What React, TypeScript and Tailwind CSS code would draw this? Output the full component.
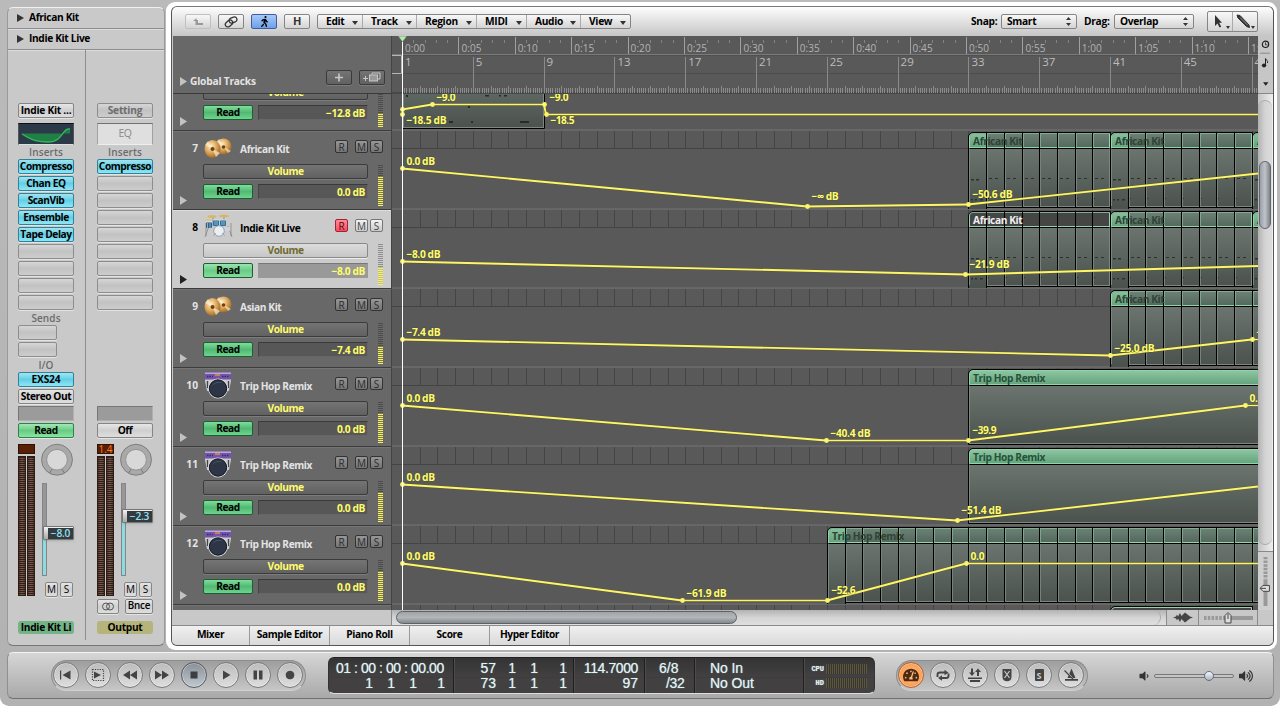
import React from "react";
import { FaWalking, FaVolumeUp, FaVolumeDown, FaTachometerAlt } from "react-icons/fa";

const BAR = 17.7;
const ORIGIN = 402;
const LEFT = 392;
const WIDTH = 866;
const barX = (n: number) => ORIGIN + (n - 1) * BAR;

/* ---------- shared bits ---------- */

const Btn = ({ label, tone = "plain", cls = "" }: { label?: React.ReactNode; tone?: string; cls?: string }) => {
  const tones: Record<string, string> = {
    plain: "border-[#858585] bg-linear-to-b from-[#e6e6e6] via-[#cfcfcf] to-[#dedede] text-black",
    dim: "border-[#8d8d8d] bg-linear-to-b from-[#d6d6d6] via-[#c2c2c2] to-[#cdcdcd] text-[#6e6e6e]",
    blue: "border-[#2d8399] bg-linear-to-b from-[#a2e4f0] via-[#61cfe5] to-[#8fe6f4] text-black",
    green: "border-[#2b8347] bg-linear-to-b from-[#a3e8b6] via-[#67cb84] to-[#8be3a2] text-black",
  };
  return (
    <div
      className={`flex h-[15px] shrink-0 items-center justify-center rounded-[2px] border shadow-[0_1px_0_#e4e4e4] whitespace-nowrap ${tones[tone]} ${cls}`}
    >
      {label}
    </div>
  );
};

const SmallLabel = ({ children, cls }: { children: string; cls: string }) => (
  <div className={`flex items-center justify-center pt-px text-[10px] font-semibold tracking-[0.1px] text-[#6b6b6b] ${cls}`}>{children}</div>
);

/* ---------- channel strips ---------- */

type Strip = {
  inserts: string[];
  value: string;
  handle: string;
  fill: string;
  output?: boolean;
};

const Meter = () => (
  <div className="h-[140px] w-[8px] border border-[#2d1d16] bg-[repeating-linear-gradient(to_bottom,#3a251c_0,#3a251c_1px,#7b5a4c_1px,#7b5a4c_2px)]">
    <div className="h-full w-full bg-linear-to-r from-black/30 via-transparent to-black/30" />
  </div>
);

const Channel = ({ s }: { s: Strip }) => (
  <div className="flex w-[56px] flex-col text-[10.2px] font-bold tracking-[-0.45px]">
    <Btn label={s.output ? "Setting" : "Indie Kit ..."} tone={s.output ? "dim" : "plain"} cls={s.output ? "tracking-[-0.2px]" : "tracking-[-0.25px]"} />
    <div className="mt-[5px] h-[22px] shrink-0">
      {s.output ? (
        <div className="flex h-full items-center justify-center border border-t-[#707070] border-x-[#a0a0a0] border-b-[#eee] bg-[#dfdfdf] text-[10.5px] font-normal text-[#8a8a8a]">
          EQ
        </div>
      ) : (
        <div className="h-full border border-t-[#111] border-x-[#555] border-b-[#ddd] bg-[#2c3949]">
          <svg width="54" height="20" viewBox="0 0 54 20">
            <path d="M3 10C14 17 20 18 29 18C39 18 42 12 45 8C47 5 49 5 51 5V9.500H3Z" fill="#217f45" />
            <path d="M3 10C14 17 20 18 29 18C39 18 42 12 45 8C47 5 49 4.500 51 5" fill="none" stroke="#31b95d" strokeWidth="1.300" />
          </svg>
        </div>
      )}
    </div>
    <SmallLabel cls="h-[14px] shrink-0">Inserts</SmallLabel>
    <div className="flex flex-col gap-[2px]">
      {Array.from({ length: 9 }, (_, i) => (
        <Btn key={i} label={s.inserts[i]} tone={s.inserts[i] ? "blue" : "dim"} />
      ))}
    </div>
    <div className="h-[96px] shrink-0">
      {!s.output && (
        <div className="flex flex-col">
          <SmallLabel cls="h-[15px]">Sends</SmallLabel>
          <div className="flex flex-col gap-[2px]">
            <Btn tone="dim" cls="w-[39px]" />
            <Btn tone="dim" cls="w-[39px]" />
          </div>
          <SmallLabel cls="h-[15px]">I/O</SmallLabel>
          <div className="flex flex-col gap-[2px]">
            <Btn label="EXS24" tone="blue" cls="tracking-[-0.2px]" />
            <Btn label="Stereo Out" />
          </div>
        </div>
      )}
    </div>
    <div className="mb-[2px] h-[15px] shrink-0 border border-t-[#777] border-l-[#777] border-r-[#b0b0b0] border-b-[#b0b0b0] bg-[#9b9b9b]" />
    <Btn label={s.output ? "Off" : "Read"} tone={s.output ? "plain" : "green"} />
    <div className="mt-[6px] flex h-[153px] shrink-0">
      <div className="flex w-[17px] flex-col gap-[2px]">
        <div className="flex h-[10px] items-center justify-center border border-[#2d1208] bg-[#591e04] text-[10px] leading-none font-normal tracking-normal text-[#ff7b1c]">
          {s.output ? "1.4" : ""}
        </div>
        <div className="flex gap-[1px]">
          <Meter />
          <Meter />
        </div>
      </div>
      <div className="ml-[4px] flex w-[35px] flex-col">
        <svg className="-mt-[1px] ml-[0.5px]" width="34" height="36" viewBox="0 0 34 36">
          <circle cx="17" cy="17" r="15.700" fill="#a9a9a9" stroke="#7d7d7d" />
          <path d="M9.500 30.500L12 26.500M24.500 30.500L22 26.500" stroke="#777" />
          <circle cx="17" cy="17" r="10.500" fill="#d8d8d8" stroke="#8b8b8b" strokeWidth=".8" />
        </svg>
        <div className="relative mt-[5px] ml-[3px] h-[94px] w-[5px] border border-[#858585] bg-[#979797]">
          <div className={`absolute inset-x-0 bottom-0 bg-[#8bdbe3] ${s.fill}`} />
          <div
            className={`absolute left-0 flex h-[14px] w-[31px] items-center rounded-[1px] border border-[#777] bg-linear-to-b from-[#f2f2f2] to-[#a9a9a9] pl-[4px] shadow ${s.handle}`}
          >
            <div className="flex h-[11px] w-[25px] items-center justify-center bg-[#353a3e] text-[10.2px] font-semibold tracking-[-0.2px] text-[#8de0f2]">{s.value}</div>
          </div>
        </div>
        <div className="mt-[6px] ml-[6px] flex gap-[2px] text-[10px] font-normal tracking-normal">
          <Btn label="M" cls="h-[13px] w-[13px] text-[#555]" />
          <Btn label="S" cls="h-[13px] w-[13px] text-[#555]" />
        </div>
      </div>
    </div>
    <div className="mt-[2px] flex h-[13px] shrink-0 justify-between">
      {s.output && (
        <>
          <Btn
            cls="h-[13px] w-[22px]"
            label={
              <svg width="14" height="9" viewBox="0 0 14 9" fill="none" stroke="#555">
                <circle cx="5" cy="4.500" r="3.500" />
                <circle cx="9" cy="4.500" r="3.500" />
              </svg>
            }
          />
          <Btn label="Bnce" cls="h-[13px] w-[28px] text-[#555] text-[9.8px] font-semibold tracking-[-0.2px]" />
        </>
      )}
    </div>
    <div
      className={`mt-[9px] flex h-[13px] shrink-0 items-center justify-center rounded-[3px] tracking-[-0.3px] whitespace-nowrap ${s.output ? "bg-[#b5b47b]" : "bg-[#73b487]"}`}
    >
      {s.output ? "Output" : "Indie Kit Li"}
    </div>
  </div>
);

const Inspector = () => (
  <div className="flex h-[639px] w-[158px] shrink-0 flex-col rounded-[6px] border border-t-[#f0f0f0] border-x-[#9a9a9a] border-b-[#777] bg-[#c9c9c9] text-[10.2px] font-bold tracking-[-0.35px] text-black">
    {["African Kit", "Indie Kit Live"].map((t) => (
      <div key={t} className="flex h-[21px] shrink-0 items-center border-b border-[#8e8e8e] pl-[9px] shadow-[0_1px_0_#dcdcdc]">
        <svg width="7" height="8" viewBox="0 0 7 8">
          <path d="M0 0L7 4L0 8Z" fill="#333" />
        </svg>
        <span className="ml-[5px]">{t}</span>
      </div>
    ))}
    <div className="flex h-[590px]">
      <div className="h-[590px] w-[78px] border-r border-[#8e8e8e] pt-[53px] pl-[10px]">
        <Channel s={{ inserts: ["Compresso", "Chan EQ", "ScanVib", "Ensemble", "Tape Delay"], value: "−8.0", handle: "top-[42px]", fill: "h-[44px]" }} />
      </div>
      <div className="pt-[53px] pl-[11px]">
        <Channel s={{ inserts: ["Compresso"], value: "−2.3", handle: "top-[25px]", fill: "h-[60px]", output: true }} />
      </div>
    </div>
  </div>
);

/* ---------- toolbar ---------- */

const Stepper = () => (
  <svg width="5" height="9" viewBox="0 0 5 9" fill="#333">
    <path d="M2.500 0L5 3H0ZM2.500 9L5 6H0Z" />
  </svg>
);
const Down = ({ cls = "" }: { cls?: string }) => (
  <svg className={cls} width="6" height="4" viewBox="0 0 6 4" fill="#333">
    <path d="M0 0H6L3 4Z" />
  </svg>
);

const toolBtn = "flex h-[15px] w-[26px] items-center justify-center rounded-[2px] border border-[#858585] bg-linear-to-b from-[#f8f8f8] to-[#d4d4d4]";

const Toolbar = () => (
  <div className="flex h-[29px] shrink-0 items-center rounded-t-[5px] bg-linear-to-b from-[#fdfdfd] to-[#c6c6c6] text-[10.2px] font-bold tracking-[-0.3px] text-black">
    <div className="flex w-[145px] gap-[7px] pl-[13px]">
      <div className={`${toolBtn} border-[#c0c0c0]`}>
        <svg width="11" height="8" viewBox="0 0 11 8">
          <path d="M0 3L3.500 0V2H5V5H10V7H2.500V3Z" fill="#999" />
        </svg>
      </div>
      <div className={toolBtn}>
        <svg width="14" height="12" viewBox="0 0 14 12" fill="none" stroke="#333" strokeWidth="1.300">
          <rect x="5" y="1.500" width="8" height="5" rx="2.500" transform="rotate(-20 9 4)" />
          <rect x="1" y="5" width="8" height="5" rx="2.500" transform="rotate(-40 5 7.500)" />
        </svg>
      </div>
      <div className="flex h-[15px] w-[26px] items-center justify-center rounded-[2px] border border-[#3d5f9b] bg-linear-to-b from-[#a5c9fa] to-[#6f9fe9] text-[11px]">
        <FaWalking />
      </div>
      <div className={`${toolBtn} text-[11px] font-bold text-[#333]`}>H</div>
    </div>
    <div className="flex h-[15px] rounded-[2px] border border-[#858585] bg-linear-to-b from-[#f8f8f8] to-[#d4d4d4]">
      {[
        ["Edit", "w-[45px]"],
        ["Track", "w-[54px]"],
        ["Region", "w-[60px]"],
        ["MIDI", "w-[50px]"],
        ["Audio", "w-[54px]"],
        ["View", "w-[49px]"],
      ].map(([t, w], i) => (
        <div key={t} className={`flex items-center justify-between pr-[4px] pl-[8px] ${i < 5 ? "border-r border-[#aaa]" : ""} ${w}`}>
          {t}
          <Down cls="mt-[3px]" />
        </div>
      ))}
    </div>
    <div className="ml-auto flex items-center pr-[15px]">
      <span className="w-[30px]">Snap:</span>
      <div className="flex h-[15px] w-[76px] items-center justify-between rounded-[2px] border border-[#858585] bg-linear-to-b from-[#f8f8f8] to-[#d4d4d4] px-[5px]">
        Smart
        <Stepper />
      </div>
      <span className="ml-[7px] w-[30px]">Drag:</span>
      <div className="flex h-[15px] w-[80px] items-center justify-between rounded-[2px] border border-[#858585] bg-linear-to-b from-[#f8f8f8] to-[#d4d4d4] px-[5px]">
        Overlap
        <Stepper />
      </div>
      <div className="ml-[13px] flex h-[21px] w-[51px] rounded-[2px] border border-[#858585] bg-linear-to-b from-[#f8f8f8] to-[#d4d4d4]">
        <svg width="49" height="19" viewBox="0 0 49 19" fill="#333">
          <path d="M7 3V14L9.500 11.500L11.500 15.500L13.200 14.700L11.200 10.800H14Z" />
          <path d="M18 14H22L20 17ZM43 14H47L45 17Z" />
          <path d="M24.500 0V19" stroke="#aaa" />
          <path d="M29 3L32 3.500L41 13L41.500 15.500L38.500 14.500L30 6Z" stroke="#333" />
          <path d="M32 5.500L39.500 13" stroke="#aaa" strokeWidth=".8" />
        </svg>
      </div>
    </div>
  </div>
);

/* ---------- track headers ---------- */

const Cymbals = () => (
  <svg width="28" height="21" viewBox="0 0 28 21">
    <defs>
      <radialGradient id="cym" cx="0.4" cy="0.35" r="0.75">
        <stop offset="0" stopColor="#fff0c8" />
        <stop offset="0.5" stopColor="#dba458" />
        <stop offset="1" stopColor="#8a5620" />
      </radialGradient>
    </defs>
    <ellipse cx="19.500" cy="8.500" rx="8" ry="8" fill="url(#cym)" />
    <path d="M19.500 8.500L12 4L15 1ZM19.500 8.500L27 13L24 15Z" fill="#fff3d5" opacity=".6" />
    <ellipse cx="8.500" cy="11" rx="8" ry="9" fill="url(#cym)" />
    <path d="M8.500 11L1 7L4 3ZM8.500 11L16 15L12 19Z" fill="#fff3d5" opacity=".65" />
    <circle cx="8.500" cy="11" r="2" fill="#70420f" />
    <circle cx="19.500" cy="9" r="1.800" fill="#70420f" />
  </svg>
);
const DrumKit = () => (
  <svg width="29" height="24" viewBox="0 0 29 24">
    <path d="M2 9V22M27 9V22M5 12L1 23M24 12L28 23M9 2V12M20 2V12" stroke="#888" strokeWidth=".8" />
    <ellipse cx="8" cy="2.500" rx="4.500" ry="1.200" fill="#d9b65c" />
    <ellipse cx="20" cy="2" rx="5" ry="1.200" fill="#d9b65c" />
    <ellipse cx="4" cy="6" rx="3" ry="1" fill="#e0c676" />
    <rect x="2" y="8" width="6" height="6" rx="1" fill="#2a628c" />
    <rect x="9" y="6" width="6" height="6" rx="1" fill="#30709c" />
    <rect x="16" y="6" width="6" height="6" rx="1" fill="#30709c" />
    <rect x="20" y="13" width="6" height="4" rx="1" fill="#d0d4d8" />
    <path d="M3.500 9V14M11 7V11M13 7V11M18 7V11M20 7V11M6 9V14" stroke="#b5d4e8" strokeWidth=".7" />
    <path d="M2 8H8M9 6H15M16 6H22" stroke="#e4edf3" strokeWidth=".8" />
    <circle cx="15" cy="17" r="5.300" fill="#eceef0" stroke="#8aa6b8" />
    <path d="M9 22L12 19M21 22L18 19" stroke="#aaa" />
  </svg>
);
const Speaker = () => (
  <svg width="28" height="27" viewBox="0 0 28 27">
    <path d="M1 1H27V9L25 19H3L1 9Z" fill="#c9c9ce" />
    <rect x="1" y="0.500" width="26" height="7" fill="#7356aa" />
    <rect x="1" y="0.500" width="26" height="1.500" fill="#b9a5e0" />
    <path d="M3 4.500H9M18 4.500H25" stroke="#3b2a68" strokeWidth="1.500" strokeDasharray="1.500 1" />
    <path d="M11 3H16" stroke="#e38f3c" strokeWidth="1.500" />
    <path d="M3.500 9V16M24.500 9V16" stroke="#444" strokeWidth="1.300" />
    <circle cx="14" cy="16.500" r="10" fill="#dcdde1" />
    <circle cx="14" cy="16.500" r="8.700" fill="#2d3547" stroke="#11151f" />
    <path d="M8 14A7 7 0 0 1 19 11.500A10 10 0 0 0 8 14Z" fill="#58647c" opacity=".6" />
  </svg>
);

type Track = { n: number; name: string; icon: string; value: string; level: number; selected?: boolean; clipped?: boolean };
const tracks: Track[] = [
  { n: 6, name: "", icon: "", value: "−12.8 dB", level: 14, clipped: true },
  { n: 7, name: "African Kit", icon: "cym", value: "0.0 dB", level: 30 },
  { n: 8, name: "Indie Kit Live", icon: "kit", value: "−8.0 dB", level: 18, selected: true },
  { n: 9, name: "Asian Kit", icon: "cym", value: "−7.4 dB", level: 18 },
  { n: 10, name: "Trip Hop Remix", icon: "spk", value: "0.0 dB", level: 30 },
  { n: 11, name: "Trip Hop Remix", icon: "spk", value: "0.0 dB", level: 30 },
  { n: 12, name: "Trip Hop Remix", icon: "spk", value: "0.0 dB", level: 30 },
];

const TrackHeader = ({ t }: { t: Track }) => {
  const sel = t.selected;
  const box = sel
    ? "border-[#777] bg-linear-to-b from-[#f4f4f4] to-[#c9c9c9] text-[#444]"
    : "border-[#333] bg-linear-to-b from-[#979797] to-[#757575] text-[#2b2b2b]";
  return (
    <div
      className={`flex h-[79px] w-[218px] shrink-0 border-t border-b border-b-[#3c3c3c] ${sel ? "border-t-[#dcdcdc] bg-[#cbcbcb] text-black" : "border-t-[#747474] bg-[#686868] text-[#e3e3e3]"}`}
    >
      <div className="flex w-[30px] flex-col justify-between pt-[8px] pb-[4px] pl-[7px]">
        <span className="h-[16px] w-[18px] text-right text-[10.2px] leading-[16px] font-bold">{t.clipped ? "" : t.n}</span>
        <svg width="7" height="9" viewBox="0 0 7 9">
          <path d="M0 0L7 4.500L0 9Z" fill={sel ? "#222" : "#c2c2c2"} />
        </svg>
      </div>
      <div className="flex w-[188px] flex-col">
        <div className="flex h-[32px] pt-[4px] pl-[1px]">
          {!t.clipped && (
            <>
              <div className={`w-[36px] ${t.icon === "cym" ? "pt-[2px]" : "-mt-px"}`}>
                {t.icon === "cym" ? <Cymbals /> : t.icon === "kit" ? <DrumKit /> : <Speaker />}
              </div>
              <span className="w-[95px] pt-[5px] text-[10.2px] leading-[16px] font-bold tracking-[-0.4px] whitespace-nowrap">{t.name}</span>
              <div className="flex h-[13px] pt-[4px] text-[10px] leading-none">
                <span
                  className={`flex h-[13px] w-[13px] items-center justify-center rounded-[2px] border ${sel ? "border-[#a32035] bg-linear-to-b from-[#ff8a98] to-[#f44b60] text-[#5a0813]" : box}`}
                >
                  R
                </span>
                <span className={`ml-[7px] flex h-[13px] w-[13px] items-center justify-center rounded-[2px] border ${box}`}>M</span>
                <span className={`ml-[2px] flex h-[13px] w-[13px] items-center justify-center rounded-[2px] border ${box}`}>S</span>
              </div>
            </>
          )}
        </div>
        <div className="flex">
          <div className="flex w-[165px] flex-col gap-[5px]">
            <div
              className={`flex h-[15px] items-center justify-center rounded-[2px] border text-[10.2px] font-bold tracking-[-0.45px] ${sel ? "border-[#8a8a8a] bg-linear-to-b from-[#dcdcdc] to-[#c6c6c6] text-[#6f6b2e] shadow-[0_1px_0_#eee]" : "border-[#3b3b3b] bg-linear-to-b from-[#747474] to-[#616161] text-[#fffc6a] shadow-[0_1px_0_#7c7c7c]"}`}
            >
              Volume
            </div>
            <div className="flex gap-[5px] text-[10.2px] font-bold tracking-[-0.4px]">
              <div
                className={`flex h-[15px] w-[50px] items-center justify-center rounded-[2px] border border-[#1c5f33] text-black ${sel ? "bg-linear-to-b from-[#9be5b0] via-[#6acb87] to-[#84dd9c]" : "bg-linear-to-b from-[#7fdd9b] via-[#51b973] to-[#6fd48d]"}`}
              >
                Read
              </div>
              <div
                className={`flex h-[15px] w-[110px] items-center justify-end border pt-[2px] pr-[2px] text-[#fffc6a] ${sel ? "border-[#999] border-t-[#777] bg-[#999]" : "border-[#666] border-t-[#3a3a3a] border-l-[#444] bg-[#575757]"}`}
              >
                {t.value}
              </div>
            </div>
          </div>
          <div className="mt-px ml-[10px] flex h-[41px] w-[5px] flex-col justify-end overflow-hidden">
            <div
              className={`flex-1 ${sel ? "bg-[repeating-linear-gradient(to_top,#8f8f8f_0,#8f8f8f_1px,#cbcbcb_1px,#cbcbcb_2px)]" : "bg-[repeating-linear-gradient(to_top,#4c4c4c_0,#4c4c4c_1px,#686868_1px,#686868_2px)]"}`}
            />
            <div
              className={sel ? "bg-[repeating-linear-gradient(to_top,#f3ee6b_0,#f3ee6b_1px,#c4c182_1px,#c4c182_2px)]" : "bg-[repeating-linear-gradient(to_top,#f3ee6b_0,#f3ee6b_1px,#7d7b47_1px,#7d7b47_2px)]"}
              style={{ height: t.level }}
            />
          </div>
        </div>
      </div>
    </div>
  );
};

/* ---------- arrange lanes ---------- */

type RegionT = { start: number; end: number; name: string; loop?: boolean; selected?: boolean; notes?: boolean };
type LaneT = { top: number; regions: RegionT[]; pts: [number, number][]; labels: [number, number, string][] };

const lanes: LaneT[] = [
  {
    top: 52,
    regions: [{ start: 1, end: 9.04, name: "" }],
    pts: [[402, 109.5], [432, 104.5], [544, 104.5], [546, 114.5], [1258, 114.5]],
    labels: [[436, 101, "−9.0"], [406, 124, "−18.5 dB"], [549, 101, "−9.0"], [550, 124, "−18.5"]],
  },
  {
    top: 131,
    regions: [
      { start: 33, end: 41, name: "African Kit", loop: true, notes: true },
      { start: 41, end: 49, name: "African Kit", loop: true, notes: true },
      { start: 49, end: 51, name: "African Kit", loop: true, notes: true },
    ],
    pts: [[402, 168.5], [807, 206.5], [968, 204.5], [1258, 173.5]],
    labels: [[406, 165, "0.0 dB"], [811, 200, "−∞ dB"], [972, 198, "−50.6 dB"]],
  },
  {
    top: 210,
    regions: [
      { start: 33, end: 41, name: "African Kit", loop: true, notes: true, selected: true },
      { start: 41, end: 49, name: "African Kit", loop: true, notes: true },
      { start: 49, end: 51, name: "African Kit", loop: true, notes: true },
    ],
    pts: [[402, 261.5], [965, 274.5], [1258, 266]],
    labels: [[406, 258, "−8.0 dB"], [969, 268, "−21.9 dB"]],
  },
  {
    top: 289,
    regions: [{ start: 41, end: 51, name: "African Kit", loop: true }],
    pts: [[402, 339.5], [1110, 355.5], [1252, 339.5], [1270, 339.5]],
    labels: [[406, 336, "−7.4 dB"], [1114, 352, "−25.0 dB"], [1256, 336, "−7.4"]],
  },
  {
    top: 368,
    regions: [{ start: 33, end: 51, name: "Trip Hop Remix" }],
    pts: [[402, 405.5], [826, 440.5], [968, 440.5], [1245, 405.5], [1270, 405.5]],
    labels: [[406, 402, "0.0 dB"], [830, 437, "−40.4 dB"], [972, 434, "−39.9"], [1249, 402, "0.0"]],
  },
  {
    top: 447,
    regions: [{ start: 33, end: 51, name: "Trip Hop Remix" }],
    pts: [[402, 484.5], [957, 520.5], [1258, 486.5]],
    labels: [[406, 481, "0.0 dB"], [961, 514, "−51.4 dB"]],
  },
  {
    top: 526,
    regions: [{ start: 25, end: 51, name: "Trip Hop Remix", loop: true }],
    pts: [[402, 563.5], [682, 600.5], [827, 600.5], [966, 563.5], [1270, 563.5]],
    labels: [[406, 560, "0.0 dB"], [686, 597, "−61.9 dB"], [831, 594, "−52.6"], [970, 560, "0.0"]],
  },
];

const labelWidth = (t: string) => {
  const widths: Record<number, number> = { 3: 14, 4: 19, 5: 24, 6: 28.5, 7: 34, 8: 40 };
  return t.startsWith("−∞") ? 27 : widths[t.length];
};

const Region = ({ r }: { r: RegionT }) => {
  const left = Math.round(barX(r.start)) - LEFT;
  const width = Math.round(barX(r.end)) - LEFT - left + 1;
  const cells = r.loop ? Math.round(r.end - r.start) : 0;
  const edges = Array.from({ length: Math.max(cells - 1, 0) }, (_, i) => Math.round(barX(r.start + i + 1)) - LEFT - left);
  const head = r.selected
    ? "bg-[#454545]"
    : r.loop
      ? "bg-linear-to-b from-[#6d7f75] to-[#536a5d]"
      : "bg-linear-to-b from-[#8cc5a1] to-[#65a57e]";
  return (
    <div className="absolute top-[1px] h-[78px]" style={{ left, width }}>
      <div className="flex h-[76px] flex-col overflow-hidden rounded-tl-[5px] border border-black">
        <div className={`relative h-[15px] shrink-0 overflow-hidden rounded-tl-[4px] border border-[#93d3ab] ${r.loop ? "border-t-[#7fae91]" : ""} ${head}`}>
          {r.loop && !r.selected && <div className="absolute top-0 left-0 h-full w-[17px] bg-linear-to-b from-[#86bf9b] to-[#65a57e]" />}
        </div>
        <div className="flex-1 border-x border-t border-b border-t-black border-x-[#7d8781] border-b-[#7d8781] bg-linear-to-b from-[#6b746f] to-[#4c534e]" />
      </div>
      {r.loop && <div className="absolute top-[74px] left-0 h-[4px] w-[19px] border border-t-0 border-black bg-[#4c534e]" />}
      <svg className="absolute top-0 left-0" width={width} height="78">
        {edges.map((x) => (
          <g key={x}>
            <rect x={x} y="1" width="1" height="75" fill="#000" />
            <rect x={x + 1} y="17" width="1" height="57" fill="#78827c" />
            <rect x={x + 1} y="2" width="1" height="14" fill="#82b496" opacity={r.selected ? 0 : 0.8} />
          </g>
        ))}
        {r.notes && (
          <g fill="#2c312e">
            <path d="M3 47h3v1.500h-3zM8 47h3v1.500h-3zM3 67h2v1.500h-2zM7 67h2v1.500h-2zM12 67h3v1.500h-3z" />
            {edges.map((x) => (
              <g key={x}>
                <rect x={x + 3} y="46" width="3" height="1" />
                <rect x={x + 9} y="46" width="3" height="1" />
                <rect x={x + 2} y="66" width="1" height="1" />
              </g>
            ))}
          </g>
        )}
      </svg>
      {r.name && (
        <span
          className={`absolute top-[2px] left-[5px] text-[10.2px] leading-[14px] font-bold tracking-[-0.4px] whitespace-nowrap ${r.selected ? "text-[#f0f0f0]" : r.loop ? "text-[#2d4436]" : "text-[#26513a]"}`}
        >
          {r.name}
        </span>
      )}
    </div>
  );
};

const Lane = ({ l }: { l: LaneT }) => {
  const line = l.pts.map((p) => p.join(",")).join(" ");
  return (
    <div className="relative h-[79px] w-[866px] shrink-0 overflow-hidden border-b border-[#686868] bg-[#595959]">
      <div className="h-[18px] border-b border-[#444]" />
      <svg className="absolute top-0 left-0" width={WIDTH} height="79" viewBox={`${LEFT} ${l.top} ${WIDTH} 79`}>
        {Array.from({ length: 48 }, (_, i) => (
          <rect key={i} x={Math.round(barX(i + 2))} y={l.top} width="1" height="17" fill="#454545" />
        ))}
        <rect x={LEFT} y={l.top + 77} width={WIDTH} height="1" fill="#666" />
      </svg>
      {l.regions.map((r) => (
        <Region key={r.start} r={r} />
      ))}
      <svg className="absolute top-0 left-0" width={WIDTH} height="79" viewBox={`${LEFT} ${l.top} ${WIDTH} 79`}>
        {l.top === 52 && <path d="M406 95h2v2h-2zM485 95h4v1.500h-4zM499 95h2v1.500h-2zM504 95h3v1.500h-3zM468 106h2v2h-2zM449 121h4v2h-4zM471 121h2v2h-2zM520 121h9v2h-9z" fill="#272c29" />}
        <polyline points={line} fill="none" stroke="#57542a" strokeWidth="3" opacity=".5" />
        {l.pts.slice(1).map(([x, y], i) => {
          const [px, py] = l.pts[i];
          return <line key={x} x1={px} y1={py} x2={x} y2={y} stroke="#fdf66b" strokeWidth={py === y ? 1.3 : 1.9} />;
        })}
        {l.pts.slice(0, -1).map(([x, y]) => (
          <circle key={x} cx={x + 0.5} cy={y} r="2.400" fill="#fdf66b" />
        ))}
        {l.top === 52 && <circle cx="402.500" cy="114.500" r="2.400" fill="#fdf66b" />}
        <g fill="#fffc6a" fontSize="10.200" fontWeight="700" stroke="#4b4b32" strokeWidth="1.500" strokeOpacity=".35" paintOrder="stroke">
          {l.labels.map(([x, y, t]) => (
            <text key={x} x={x + 0.5} y={y} textLength={labelWidth(t)}>
              {t}
            </text>
          ))}
        </g>
      </svg>
    </div>
  );
};

const Ruler = () => (
  <svg width={WIDTH} height="58" viewBox={`${LEFT} 36 ${WIDTH} 58`} className="shrink-0 bg-[#595959]">
    <rect x={LEFT} y="54" width={WIDTH} height="1" fill="#7a7a7a" />
    <rect x={LEFT} y="55" width={WIDTH} height="1" fill="#505050" />
    <rect x={LEFT} y="73" width={WIDTH} height="1" fill="#4d4d4d" />
    <rect x={LEFT} y="92" width={WIDTH} height="2" fill="#484848" />
    {Array.from({ length: 76 }, (_, i) => {
      const x = Math.round(ORIGIN + i * 11.28);
      return <rect key={i} x={x} y={i % 5 ? 40 : 37} width="1" height={i % 5 ? 3 : 17} fill={i % 5 ? "#838383" : "#a0a0a0"} />;
    })}
    {Array.from({ length: 16 }, (_, i) => (
      <text key={i} x={ORIGIN + i * 56.4 + 3} y="52" fontSize="10" fill="#b4b4b4" textLength="20">
        {`${Math.floor((i * 5) / 60)}:${String((i * 5) % 60).padStart(2, "0")}`}
      </text>
    ))}
    {Array.from({ length: 388 }, (_, i) => (
      <rect key={i} x={Math.round(ORIGIN + (i * BAR) / 8)} y={i % 8 ? 88 : 86} width="1" height={i % 8 ? 5 : 7} fill="#8b8b8b" />
    ))}
    {Array.from({ length: 13 }, (_, i) => (
      <g key={i}>
        <rect x={Math.round(barX(1 + i * 4))} y="57" width="1" height="36" fill="#8a8a8a" />
        <text x={barX(1 + i * 4) + 3} y="66" fontSize="11.500" fill="#bcbcbc">
          {1 + i * 4}
        </text>
      </g>
    ))}
    <path d="M392 55.500H401.500V73.500H392" fill="none" stroke="#b5b5b5" />
  </svg>
);

/* ---------- transport ---------- */

const Round = ({ tone = "plain", children }: { tone?: string; children: React.ReactNode }) => (
  <div
    className={`flex h-[26px] w-[26px] items-center justify-center rounded-full border ${
      tone === "orange"
        ? "border-[#b5642a] bg-radial from-[#ffc48a] to-[#f58a35] text-[#4a2a10]"
        : tone === "dark"
          ? "border-[#555a60] bg-linear-to-b from-[#8a9098] to-[#c0c8d0] text-[#3b3f44]"
          : "border-[#7b7b7b] bg-linear-to-b from-[#bcbcbc] to-[#dedede] text-[#444]"
    } shadow-[inset_0_0_0_1px_rgba(255,255,255,.35)]`}
  >
    {children}
  </div>
);

const g = (d: string) => (
  <svg width="16" height="16" viewBox="0 0 16 16" fill="currentColor">
    <path d={d} />
  </svg>
);

const lcdCol = "flex flex-col justify-center leading-[15px] border-r border-[#1f1f1f] shadow-[1px_0_0_#4d4b4b]";
const Nums = ({ v, w }: { v: string[]; w: string[] }) => (
  <div className="flex">
    {v.map((x, i) => (
      <span key={i} className={`text-right ${w[i]}`}>
        {x}
      </span>
    ))}
  </div>
);

const pill =
  "flex h-[31px] items-center gap-[6px] rounded-full border border-[#8d8d8d] border-b-[#d0d0d0] bg-linear-to-b from-[#9e9e9e] to-[#c6c6c6] pl-[1px]";

const Transport = () => (
  <div className="mt-[6px] ml-[7px] flex h-[47px] w-[1267px] shrink-0 items-center rounded-[6px] border border-t-[#f4f4f4] border-x-[#8f8f8f] border-b-[#727272] bg-linear-to-b from-[#d6d6d6] to-[#a9a9a9]">
    <div className={`mb-px ml-[43px] w-[255px] ${pill}`}>
      <Round>{g("M2 3.500h1.200v9H2zM12.500 3.500v9L4.500 8z")}</Round>
      <Round>
        <svg width="16" height="16" viewBox="0 0 16 16" fill="currentColor">
          <path d="M4 4.500L11 8L4 11.500Z" />
          <rect x="2.500" y="2.500" width="11" height="11" fill="none" stroke="currentColor" strokeWidth="1.200" strokeDasharray="1.200 1.200" />
        </svg>
      </Round>
      <Round>{g("M8 3.500v9L1 8zM15 3.500v9L8 8z")}</Round>
      <Round>{g("M1 3.500v9L8 8zM8 3.500v9L15 8z")}</Round>
      <Round tone="dark">{g("M4.500 4.500h7v7h-7z")}</Round>
      <Round>{g("M5 3.500v9L12.500 8z")}</Round>
      <Round>{g("M3.500 3.500h3.500v9H3.500zM9 3.500h3.500v9H9z")}</Round>
      <Round>{g("M8 3.700a4.300 4.300 0 1 0 .01 0z")}</Round>
    </div>
    <div className="ml-[22px] flex h-[37px] w-[547px] overflow-hidden rounded-[6px] border border-t-[#222] border-x-[#333] border-b-[#ddd] bg-[linear-gradient(to_bottom,#353434_0,#424040_54%,#383636_54%,#424040_57%,#424040_100%)] font-['Liberation_Sans',Arial,sans-serif] text-[14px] text-[#dff4f6] [text-shadow:0_0_1px_rgba(223,244,246,0.7)]">
      <div className={`${lcdCol} w-[125px]`}>
        <span className="pl-[7px] text-[14px] tracking-[-0.45px] whitespace-pre">01 : 00 : 00 : 00.00</span>
        <Nums v={["1", "1", "1", "1"]} w={["w-[44px]", "w-[22px]", "w-[22px]", "w-[28px]"]} />
      </div>
      <div className={`${lcdCol} w-[120px]`}>
        <Nums v={["57", "1", "1", "1"]} w={["w-[42px]", "w-[20px]", "w-[22px]", "w-[29px]"]} />
        <Nums v={["73", "1", "1", "1"]} w={["w-[42px]", "w-[20px]", "w-[22px]", "w-[29px]"]} />
      </div>
      <div className={`${lcdCol} w-[71px] pr-[6px] text-right`}>
        <span className="tracking-[-0.4px]">114.7000</span>
        <span>97</span>
      </div>
      <div className={`${lcdCol} w-[50px]`}>
        <span className="pl-[14px]">6/8</span>
        <span className="pl-[21px] tracking-[-0.3px]">/32</span>
      </div>
      <div className={`${lcdCol} w-[109px] pl-[15px] tracking-[-0.1px]`}>
        <span>No In</span>
        <span>No Out</span>
      </div>
      <div className="flex flex-col justify-center gap-[4px] pl-[7px] font-['Liberation_Mono',monospace] text-[7px] font-bold">
        {["CPU", "HD"].map((t) => (
          <div key={t} className="flex h-[10px] items-center gap-[2px]">
            <span className="w-[13px] text-right leading-[8px]">{t}</span>
            <div className="h-[10px] w-[41px] bg-[repeating-linear-gradient(to_right,#5a5640_0,#5a5640_1px,#37352c_1px,#37352c_2px)]" />
          </div>
        ))}
      </div>
    </div>
    <div className={`mb-px ml-[21px] w-[192px] ${pill}`}>
      <Round tone="orange">
        <FaTachometerAlt size={16} />
      </Round>
      <Round>
        <svg width="16" height="16" viewBox="0 0 16 16">
          <path d="M2.500 10V7.500C2.500 6 3 5.500 5 5.500H10M13.500 6.500V9C13.500 10.500 13 11 11 11H6" fill="none" stroke="currentColor" strokeWidth="1.900" />
          <path d="M9.500 2.700L13.500 5.700L9.500 8.300ZM7 8.300L3 11L7 13.700Z" fill="currentColor" />
        </svg>
      </Round>
      <Round>{g("M4 1.500h2v4h2L5 9 2 5.500h2zM10 9V5H8l3-3.500L14 5h-2v4zM1 10.500h14v1.500H1zM3 13h10v2H3z")}</Round>
      <Round>
        <svg width="16" height="16" viewBox="0 0 16 16">
          <path d="M3.500 2H12.500V10C12.500 13 10.500 14.300 8 14.300S3.500 13 3.500 10Z" fill="currentColor" />
          <path d="M5.500 4L10.500 11M10.500 4L5.500 11" stroke="#ccc" strokeWidth="1.200" />
        </svg>
      </Round>
      <Round>
        <span className="flex h-[12px] w-[9px] items-center justify-center rounded-[1px] bg-[#444] text-[9px] leading-none font-bold text-[#ccc]">S</span>
      </Round>
      <Round>
        <svg width="16" height="16" viewBox="0 0 16 16" fill="currentColor">
          <path d="M8.500 1.500L12.500 11H4.500ZM2 12H15V13.700H2Z" />
          <path d="M1.500 3.500L10 12" stroke="currentColor" strokeWidth="1.300" />
          <path d="M5.500 6.500L9.500 10.500" stroke="#ccc" strokeWidth=".7" />
        </svg>
      </Round>
    </div>
    <div className="ml-[50px] flex items-center text-[#333]">
      <FaVolumeDown size={12} />
      <div className="relative ml-[4px] h-[4px] w-[80px] rounded-full border border-[#777] bg-[#c6c6c6]">
        <div className="absolute -top-[4px] left-[49px] h-[10px] w-[10px] rounded-full border border-[#666e78] bg-linear-to-b from-[#f7f8fb] to-[#a9b4c4]" />
      </div>
      <FaVolumeUp className="ml-[5px]" size={14} />
    </div>
  </div>
);

/* ---------- app ---------- */

export default function App() {
  return (
    <div className="h-[706px] w-[1280px] overflow-hidden bg-white font-['Open_Sans','Noto_Sans',sans-serif]">
      <div className="flex h-[706px] w-[1280px] flex-col rounded-b-[9px] bg-linear-to-b from-[#bababa] to-[#b2b2b2]">
        <div className="flex h-[646px] shrink-0">
          <div className="pt-[7px] pl-[7px]">
            <Inspector />
          </div>
          <div className="mt-[2px] ml-[1px] h-[648px] w-[1111px] rounded-[9px] bg-white p-[4px] pr-[3px] pb-[4px] pl-[5px]">
            <div className="flex h-[640px] w-[1103px] flex-col overflow-hidden rounded-[6px] border border-[#555] border-t-[#777] bg-[#c8c8c8]">
              <Toolbar />
              <div className="flex h-[574px] shrink-0">
                <div className="flex w-[220px] shrink-0 flex-col border-r border-[#444] pl-[1px]">
                  <div className="flex h-[58px] w-[218px] shrink-0 items-end border-b border-[#3a3a3a] bg-[#686868] pb-[6px] pl-[7px] text-[10.2px] tracking-[-0.2px] text-[#e3e3e3]">
                    <svg className="mb-[1px]" width="7" height="9" viewBox="0 0 7 9">
                      <path d="M0 0L7 4.500L0 9Z" fill="#c2c2c2" />
                    </svg>
                    <span className="ml-[3px] leading-[12px] font-bold">Global Tracks</span>
                    <div className="mb-[2px] ml-auto flex gap-[7px] pr-[6px]">
                      {[0, 1].map((i) => (
                        <div
                          key={i}
                          className="flex h-[15px] w-[26px] items-center justify-center rounded-[2px] border border-[#3b3b3b] bg-linear-to-b from-[#747474] to-[#616161] shadow-[0_1px_0_#7c7c7c]"
                        >
                          <svg width="18" height="11" viewBox="0 0 18 11" fill="none" stroke="#c8c8c8">
                            {i === 0 ? (
                              <path d="M5 5.500H13M9 1.500V9.500" strokeWidth="1.600" />
                            ) : (
                              <>
                                <path d="M0 6.500H5M2.500 4V9" />
                                <path d="M9 2.500V1H17V7H15" />
                                <rect x="6.500" y="3" width="8" height="6" fill="#999" />
                              </>
                            )}
                          </svg>
                        </div>
                      ))}
                    </div>
                  </div>
                  <div className="h-[516px] overflow-hidden">
                    <div className="-mt-[42px] flex flex-col">
                      {tracks.map((t) => (
                        <TrackHeader key={t.n} t={t} />
                      ))}
                      <div className="h-[20px] w-[218px] border-t border-[#747474] bg-[#686868]" />
                    </div>
                  </div>
                </div>
                <div className="relative flex w-[866px] shrink-0 flex-col">
                  <Ruler />
                  <div className="h-[516px] overflow-hidden">
                    <div className="-mt-[42px] flex flex-col">
                      {lanes.map((l) => (
                        <Lane key={l.top} l={l} />
                      ))}
                      <Lane l={{ top: 605, regions: [{ start: 41, end: 49, name: "", selected: true }], pts: [], labels: [] }} />
                    </div>
                  </div>
                  <svg className="absolute top-0 left-[5px]" width="12" height="574">
                    <rect x="5" y="4" width="1" height="570" fill="#fff" />
                    <path d="M1 0H10L5.500 6Z" fill="#b8eab0" stroke="#4f7a4b" strokeWidth=".6" />
                  </svg>
                </div>
                <div className="flex w-[15px] shrink-0 flex-col bg-[#c6c6c6]">
                  <svg className="shrink-0 border-b border-[#888]" width="15" height="58" viewBox="0 0 15 58" fill="none" stroke="#222">
                    <circle cx="7.500" cy="8.500" r="3.200" strokeWidth="1.200" />
                    <path d="M7.500 6.500V9H9.500" strokeWidth=".8" />
                    <path d="M2 17.500H12" stroke="#888" />
                    <path d="M7.500 30V23C8 24.500 10.500 25 9.500 27.500" />
                    <ellipse cx="6" cy="30" rx="1.800" ry="1.500" fill="#222" />
                    <path d="M5 47H10.500L7.700 50.500Z" fill="#222" stroke="none" />
                  </svg>
                  <div className="flex h-[457px] flex-col bg-linear-to-r from-[#c4c4c4] to-[#f0f0f0] py-[6px]">
                    <div className="relative h-[445px] w-[14px] rounded-full border-y border-[#aaa] bg-linear-to-r from-[#b2b2b2] via-[#d4d4d4] to-[#dcdcdc]">
                      <div className="absolute top-[60px] left-[1px] h-[68px] w-[12px] rounded-full border border-[#62666d] bg-linear-to-r from-[#9a9ea6] via-[#c0c4ca] to-[#7e828a]" />
                    </div>
                  </div>
                  <svg width="15" height="59" viewBox="0 0 15 59" className="shrink-0 border-t border-[#8a8a8a] bg-[#cfcfcf]">
                    <path d="M7.500 5V28" stroke="#999" strokeWidth="4" strokeDasharray="2.500 1.200" />
                    <path d="M7.500 28V55" stroke="#999" strokeWidth="4" />
                    <path d="M2 37L5 34H11.500V40H5Z" fill="#ddd" stroke="#444" />
                    <path d="M2 37H8" stroke="#444" />
                  </svg>
                </div>
              </div>
              <div className="flex h-[16px] shrink-0 border-b border-[#8a8a8a] bg-[#c8c8c8]">
                <div className="w-[220px] border-r border-[#8a8a8a]" />
                <div className="relative w-[774px] bg-linear-to-b from-[#b2b2b2] via-[#d4d4d4] to-[#e0e0e0]">
                  <div className="absolute top-[1px] left-[4px] h-[13px] w-[341px] rounded-full border border-[#5d6267] bg-linear-to-b from-[#9fa4a8] via-[#b3b7ba] to-[#84898d]" />
                  <div className="absolute top-0 right-[5px] h-[15px] w-[14px] rounded-r-full border-r border-[#aaa]" />
                </div>
                <div className="flex w-[33px] items-center justify-center border-x border-[#8a8a8a]">
                  <svg width="20" height="11" viewBox="0 0 20 11" fill="#444">
                    <path d="M0 5.500L3 4.500L4 2.500L5 4.500L7 1L8.500 4L10 2.500L12 0.500L14.500 2.500L17 4.500L20 5.500L17 6.500L14.500 8.500L12 10.500L10 8.500L8.500 7L7 10L5 6.500L4 8.500L3 6.500Z" />
                  </svg>
                </div>
                <div className="flex w-[59px] items-center justify-center border-r border-[#8a8a8a]">
                  <svg width="50" height="12" viewBox="0 0 50 12">
                    <path d="M1 6H22" stroke="#999" strokeWidth="4" strokeDasharray="2.500 1.300" />
                    <path d="M22 6H50" stroke="#999" strokeWidth="4" />
                    <path d="M25 0.500L28 3.500V11H22V3.500Z" fill="#ddd" stroke="#444" />
                    <path d="M25 2V7" stroke="#444" />
                  </svg>
                </div>
              </div>
              <div className="flex h-[19px] shrink-0 bg-linear-to-b from-[#f0f0f0] to-[#dadada] text-[10.2px] font-bold tracking-[-0.4px] text-black">
                {[
                  ["Mixer", "w-[78px]"],
                  ["Sample Editor", "w-[80px]"],
                  ["Piano Roll", "w-[80px]"],
                  ["Score", "w-[80px]"],
                  ["Hyper Editor", "w-[80px]"],
                ].map(([t, w]) => (
                  <div key={t} className={`flex items-center justify-center border-r border-[#999] pb-px whitespace-nowrap ${w}`}>
                    {t}
                  </div>
                ))}
              </div>
            </div>
          </div>
        </div>
        <Transport />
        <div className="h-[7px]" />
      </div>
    </div>
  );
}
